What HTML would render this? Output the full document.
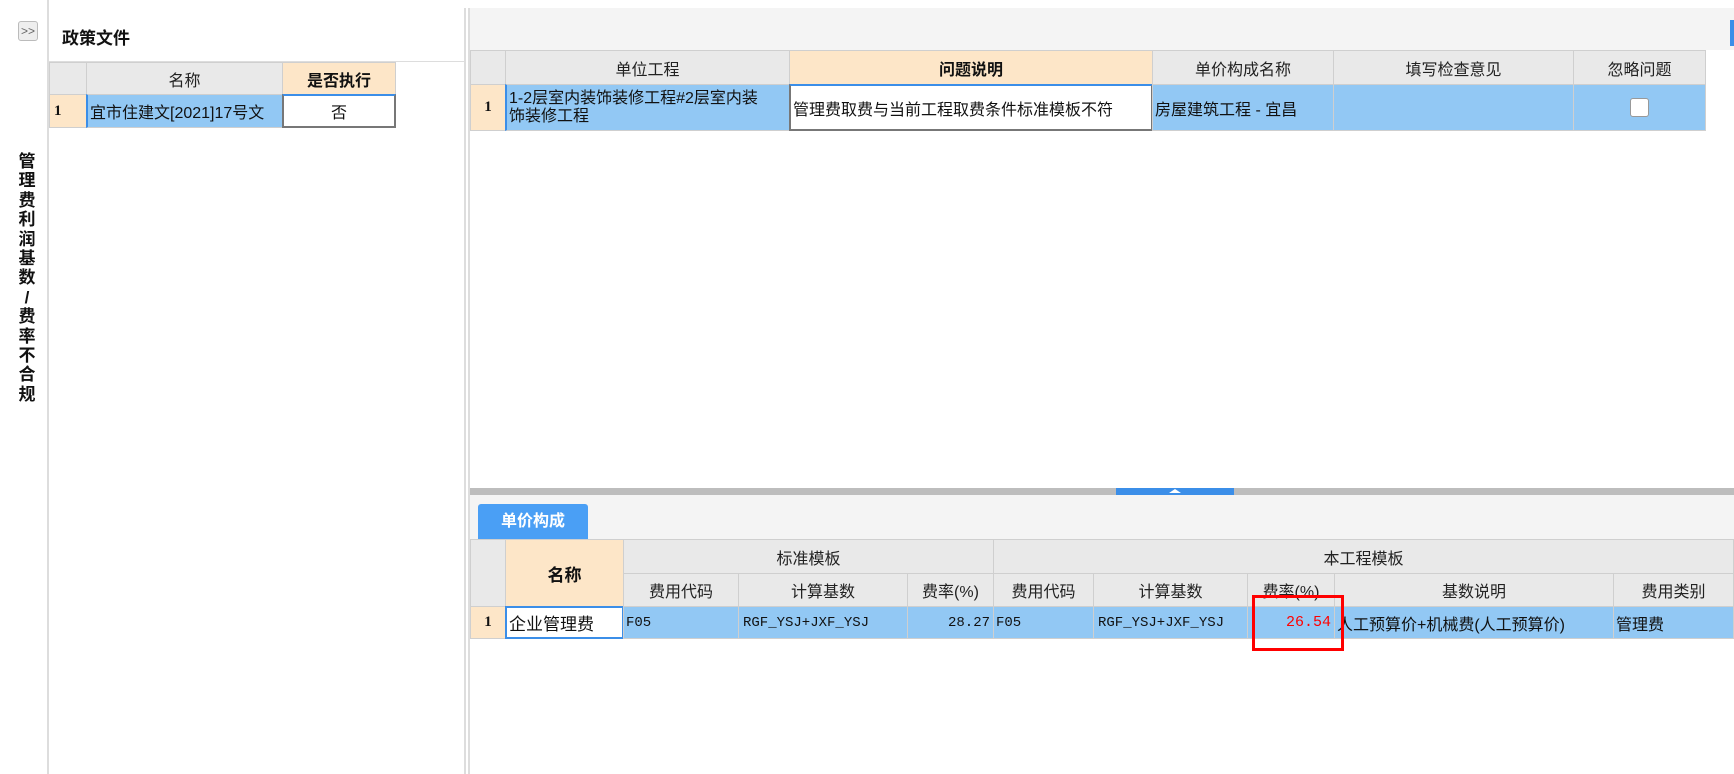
<!DOCTYPE html>
<html><head><meta charset="utf-8"><style>
*{margin:0;padding:0;box-sizing:border-box}
body{width:1734px;height:774px;background:#fff;position:relative;overflow:hidden;font-family:"Liberation Sans","Noto Sans CJK SC",sans-serif;font-size:16px;color:#111}
.a{position:absolute}
.c{position:absolute;border:1px solid #cfcfcf;display:flex;align-items:center;justify-content:center;white-space:nowrap;overflow:hidden}
.h{background:#e9e9e9;color:#222}
.p{background:#fde6c8;font-weight:bold}
.r{background:#92c8f4;justify-content:flex-start;padding-left:2px}
.n{background:#fde6c8;font-weight:bold;font-family:"Liberation Serif",serif;font-size:15px}
.m{font-family:"Liberation Mono","Noto Sans CJK SC",monospace;font-size:14px}
.w{background:#fff;border:2px solid #777;justify-content:flex-start;padding-left:2px}
</style></head><body>
<div class="a" style="left:47px;top:0;width:2px;height:774px;background:#ddd"></div>
<div class="a" style="left:18px;top:21px;width:20px;height:20px;border:1px solid #bbb;border-radius:3px;background:#eee;font-size:12px;color:#666;text-align:center;line-height:18px">&gt;&gt;</div>
<div class="a" style="left:16px;top:152px;width:22px;font-weight:bold;font-size:17px;line-height:19.4px;text-align:center">管<br>理<br>费<br>利<br>润<br>基<br>数<br>/<br>费<br>率<br>不<br>合<br>规</div>
<div class="a" style="left:62px;top:24px;font-weight:bold;font-size:17px">政策文件</div>
<div class="a" style="left:49px;top:61px;width:416px;height:1px;background:#ddd"></div>
<div class="a" style="left:464px;top:8px;width:2px;height:766px;background:#ddd"></div>
<div class="c h" style="left:49px;top:62px;width:38px;height:33px"></div>
<div class="c h" style="left:86px;top:62px;width:197px;height:33px">名称</div>
<div class="c p" style="left:282px;top:62px;width:114px;height:33px">是否执行</div>
<div class="c n" style="left:49px;top:94px;width:38px;height:34px;justify-content:flex-start;padding-left:4px">1</div>
<div class="c r" style="left:86px;top:94px;width:197px;height:34px;border-left:2px solid #3b8ee8">宜市住建文[2021]17号文</div>
<div class="c" style="left:282px;top:94px;width:114px;height:34px;border:2px solid #777;border-top:2px solid #3b8ee8;background:#fff">否</div>
<div class="a" style="left:468px;top:8px;width:1266px;height:42px;background:#f4f4f4"></div>
<div class="a" style="left:1730px;top:20px;width:4px;height:26px;background:#3b8ee8"></div>
<div class="a" style="left:468px;top:8px;width:2px;height:766px;background:#ddd"></div>
<div class="c h" style="left:470px;top:50px;width:36px;height:35px"></div>
<div class="c h" style="left:505px;top:50px;width:285px;height:35px">单位工程</div>
<div class="c p" style="left:789px;top:50px;width:364px;height:35px">问题说明</div>
<div class="c h" style="left:1152px;top:50px;width:182px;height:35px">单价构成名称</div>
<div class="c h" style="left:1333px;top:50px;width:241px;height:35px">填写检查意见</div>
<div class="c h" style="left:1573px;top:50px;width:133px;height:35px">忽略问题</div>
<div class="c n" style="left:470px;top:84px;width:36px;height:47px">1</div>
<div class="c r" style="left:505px;top:84px;width:285px;height:47px;border-left:2px solid #3b8ee8;white-space:normal;font-size:16px;line-height:18px;padding-right:22px">1-2层室内装饰装修工程#2层室内装饰装修工程</div>
<div class="c w" style="left:789px;top:84px;width:364px;height:47px;border-top-color:#3b8ee8">管理费取费与当前工程取费条件标准模板不符</div>
<div class="c r" style="left:1152px;top:84px;width:182px;height:47px">房屋建筑工程 - 宜昌</div>
<div class="c r" style="left:1333px;top:84px;width:241px;height:47px"></div>
<div class="c r" style="left:1573px;top:84px;width:133px;height:47px;justify-content:center;padding:0"><div style="width:19px;height:19px;background:#fff;border:1px solid #999;border-radius:3px"></div></div>
<div class="a" style="left:470px;top:488px;width:1264px;height:7px;background:#bdbdbd"></div>
<div class="a" style="left:1116px;top:488px;width:118px;height:7px;background:#3b8ee8"></div>
<div class="a" style="left:1169px;top:489px;width:0;height:0;border-left:6px solid transparent;border-right:6px solid transparent;border-bottom:4px solid #fff"></div>
<div class="a" style="left:470px;top:495px;width:1264px;height:45px;background:#f4f4f4"></div>
<div class="a" style="left:478px;top:504px;width:110px;height:36px;background:#4a9ff5;border-radius:3px 3px 0 0;color:#fff;font-weight:bold;font-size:16px;text-align:center;line-height:36px">单价构成</div>
<div class="c h" style="left:470px;top:539px;width:36px;height:68px"></div>
<div class="c p" style="left:505px;top:539px;width:119px;height:68px;font-size:17px">名称</div>
<div class="c h" style="left:623px;top:539px;width:371px;height:35px">标准模板</div>
<div class="c h" style="left:993px;top:539px;width:741px;height:35px">本工程模板</div>
<div class="c h" style="left:623px;top:573px;width:116px;height:34px">费用代码</div>
<div class="c h" style="left:738px;top:573px;width:170px;height:34px">计算基数</div>
<div class="c h" style="left:907px;top:573px;width:87px;height:34px">费率(%)</div>
<div class="c h" style="left:993px;top:573px;width:101px;height:34px">费用代码</div>
<div class="c h" style="left:1093px;top:573px;width:155px;height:34px">计算基数</div>
<div class="c h" style="left:1247px;top:573px;width:88px;height:34px">费率(%)</div>
<div class="c h" style="left:1334px;top:573px;width:280px;height:34px">基数说明</div>
<div class="c h" style="left:1613px;top:573px;width:121px;height:34px">费用类别</div>
<div class="c n" style="left:470px;top:606px;width:36px;height:33px">1</div>
<div class="c w" style="left:505px;top:606px;width:119px;height:33px;border-color:#3b8ee8;font-size:17px">企业管理费</div>
<div class="c r m" style="left:623px;top:606px;width:116px;height:33px">F05</div>
<div class="c r m" style="left:738px;top:606px;width:170px;height:33px;padding-left:4px">RGF_YSJ+JXF_YSJ</div>
<div class="c r m" style="left:907px;top:606px;width:87px;height:33px;justify-content:flex-end;padding-right:3px">28.27</div>
<div class="c r m" style="left:993px;top:606px;width:101px;height:33px">F05</div>
<div class="c r m" style="left:1093px;top:606px;width:155px;height:33px;padding-left:4px">RGF_YSJ+JXF_YSJ</div>
<div class="c r m" style="left:1247px;top:606px;width:88px;height:33px;justify-content:flex-end;padding-right:3px;color:#f00;font-size:15px">26.54</div>
<div class="c r" style="left:1334px;top:606px;width:280px;height:33px">人工预算价+机械费(人工预算价)</div>
<div class="c r" style="left:1613px;top:606px;width:121px;height:33px">管理费</div>
<div class="a" style="left:1252px;top:595px;width:92px;height:56px;border:3px solid #f00"></div>
</body></html>
